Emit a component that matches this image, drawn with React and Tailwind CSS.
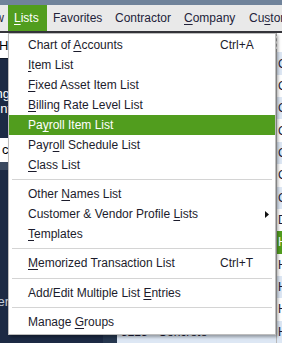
const items = [
  { pre: "Chart of ", u: "A", post: "ccounts", sc: "Ctrl+A" },
  { pre: "", u: "I", post: "tem List" },
  { pre: "", u: "F", post: "ixed Asset Item List" },
  { pre: "", u: "B", post: "illing Rate Level List" },
  { pre: "Pa", u: "y", post: "roll Item List", active: true },
  { pre: "Payr", u: "o", post: "ll Schedule List" },
  { pre: "", u: "C", post: "lass List" },
  { sep: 9 },
  { pre: "Other ", u: "N", post: "ames List" },
  { pre: "Customer & Vendor Profile ", u: "L", post: "ists", sub: true },
  { pre: "", u: "T", post: "emplates" },
  { sep: 9 },
  { pre: "", u: "M", post: "emorized Transaction List", sc: "Ctrl+T" },
  { sep: 10 },
  { pre: "Add/Edit Multiple List ", u: "E", post: "ntries" },
  { sep: 9 },
  { pre: "Manage ", u: "G", post: "roups" },
];

const rows = [
  { name: "5000 - Cost of Goods Sold", type: "Cost of Goods Sold" },
  { name: "5010 - Materials", type: "Cost of Goods Sold" },
  { name: "5020 - Subcontractors", type: "Cost of Goods Sold" },
  { name: "5030 - Equipment", type: "Cost of Goods Sold" },
  { name: "5040 - Labor", type: "Cost of Goods Sold" },
  { name: "5050 - Permits", type: "Cost of Goods Sold" },
  { name: "5060 - Other Costs", type: "Cost of Goods Sold" },
  { name: "5100 - Discounts", type: "Discount" },
  { name: "5200 - Site Work", type: "Header", sel: true },
  { name: "5210 - Excavation", type: "Header" },
  { name: "5211 - Grading", type: "Header" },
  { name: "5212 - Footings", type: "Header" },
  { name: "5213 - Concrete", type: "Header" },
];

function MenuItem({ it }) {
  if (it.sep) {
    return (
      <div className={`flex items-center px-[3px] ${it.sep === 10 ? "h-[10px]" : "h-[9px]"}`}>
        <div className="h-px w-full bg-[#d4d4d4]" />
      </div>
    );
  }
  return (
    <div
      className={`flex h-[20px] items-center pl-[19px] whitespace-nowrap ${
        it.active ? "bg-[#519d1e] text-white" : "text-[#1c1c2c]"
      }`}
    >
      <span className="flex-1">
        {it.pre}
        <span className="underline underline-offset-[2px]">{it.u}</span>
        {it.post}
      </span>
      <span className="flex w-[55px] items-center">
        {it.sc}
        {it.sub && (
          <svg width="4" height="7" viewBox="0 0 4 7" className="ml-[45px]">
            <polygon points="0,0 4,3.5 0,7" fill="#111" />
          </svg>
        )}
      </span>
    </div>
  );
}

export default function App() {
  return (
    <div className="relative h-[343px] w-[282px] overflow-hidden bg-white font-['Liberation_Sans',Arial,sans-serif] text-[12px]">
      <div className="h-[5px] bg-[#70839b]" />
      <div className="flex h-[26px] items-stretch overflow-hidden whitespace-nowrap bg-[#e9e9e9] text-[#23233a]">
        <span className="flex w-[8px] shrink-0 items-center justify-end overflow-hidden pr-[4px]">
          <span>View</span>
        </span>
        <span className="flex w-[39px] shrink-0 items-center bg-[#519d1e] pl-[6px] text-white">
          <span className="underline underline-offset-[2px]">L</span>ists
        </span>
        <span className="flex w-[68px] shrink-0 items-center pl-[6px]">Favorites</span>
        <span className="flex w-[69px] shrink-0 items-center">Contractor</span>
        <span className="flex w-[65px] shrink-0 items-center">
          <span className="underline underline-offset-[2px]">C</span>ompany
        </span>
        <span className="flex shrink-0 items-center">
          Cu<span className="underline underline-offset-[2px]">s</span>tomers
        </span>
      </div>
      <div className="h-[2px] bg-[#34343a]" />

      <div className="flex h-[310px]">
        {/* left icon bar */}
        <div className="flex w-[117px] shrink-0 overflow-hidden bg-[#1c2a44]">
          <div className="flex w-[103px] flex-col overflow-hidden text-[13px]">
            <div className="flex h-[25px] items-center bg-white text-black">
              <span className="ml-[-1px] whitespace-nowrap">Home Page</span>
            </div>
            <div className="flex h-[80px] flex-col border-t border-[#0f1828] pt-[27px] leading-[15px] text-white">
              <div className="flex w-[10px] justify-end whitespace-nowrap">Banking</div>
              <div className="ml-[-43px] whitespace-nowrap">Doc Center</div>
            </div>
            <div className="flex h-[24px] items-center bg-white text-black">
              <span className="pl-[2px] whitespace-nowrap">calendar</span>
            </div>
            <div className="h-[8px] bg-[#3a4960]" />
            <div className="flex-1 pt-[124px] leading-[15px] text-[#c3cad5]">
              <div className="flex w-[9px] justify-end whitespace-nowrap">Vendor Center</div>
            </div>
          </div>
          <div className="w-[14px] bg-[#26374f]" />
        </div>

        {/* list */}
        <div className="flex min-w-0 flex-1 flex-col">
          <div className="flex h-[20px]">
            <div className="w-[159px]" />
            <div className="flex-1 border-l border-dashed border-[#a8a8a8]" />
          </div>
          {rows.map((r, i) => (
            <div
              key={i}
              className={`flex h-[23px] items-center whitespace-nowrap ${
                r.sel ? "bg-[#519d1e] text-white" : i % 2 === 0 ? "bg-[#dde7f4] text-[#1a1a36]" : "bg-white text-[#1a1a36]"
              }`}
            >
              <div className="w-[159px] overflow-hidden pl-[4px]">{r.name}</div>
              <div className="flex h-full flex-1 items-center overflow-hidden border-l border-[#b8b8b8] pl-[1px]">
                {r.type}
              </div>
            </div>
          ))}
        </div>
      </div>

      {/* dropdown menu */}
      <div className="absolute left-[8px] top-[33px] w-[268px] border border-[#bdbdbd] bg-white pt-[1px] pb-[2px] shadow-[2px_2px_3px_rgba(0,0,0,0.35)]">
        {items.map((it, i) => (
          <MenuItem key={i} it={it} />
        ))}
      </div>
    </div>
  );
}
